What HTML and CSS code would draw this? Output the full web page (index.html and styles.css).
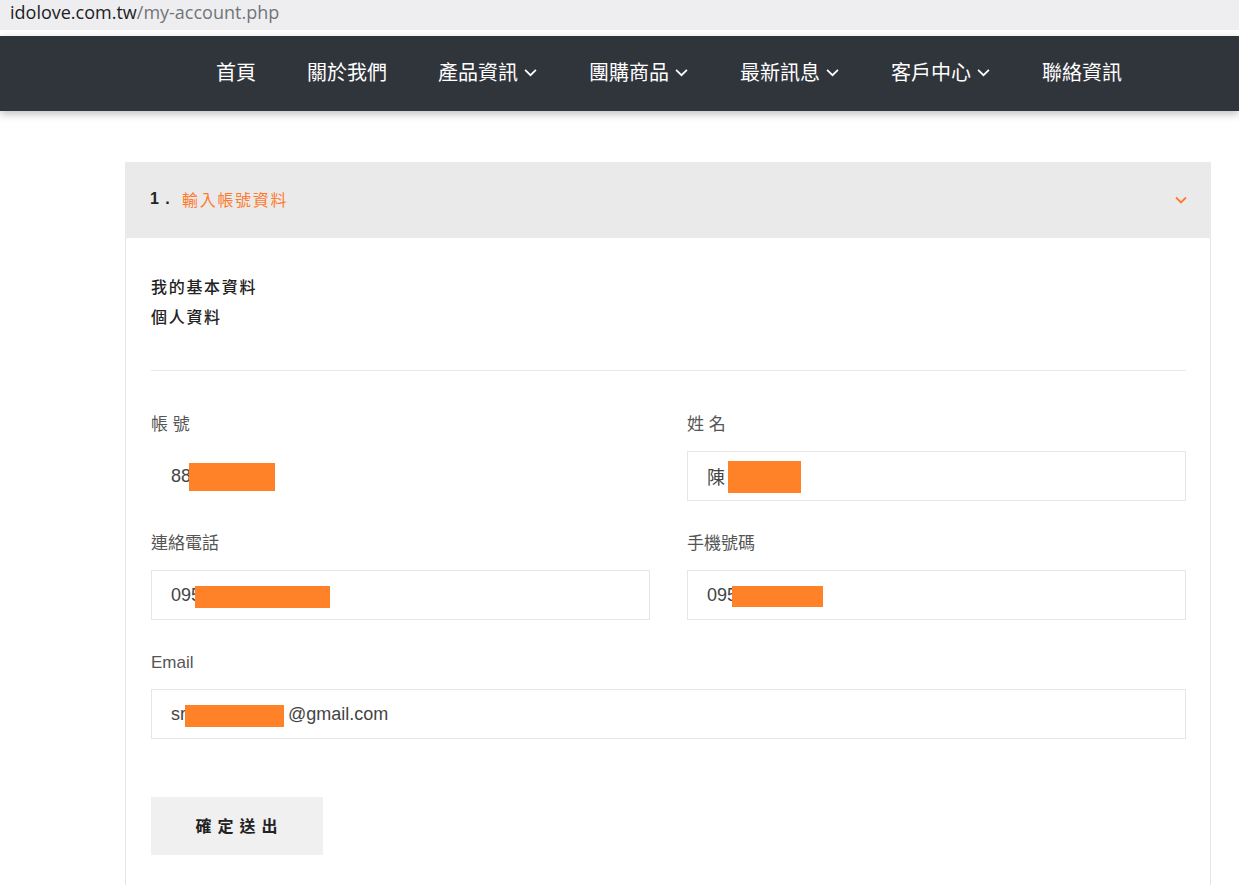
FILE: index.html
```html
<!DOCTYPE html>
<html lang="zh-Hant">
<head>
    <meta charset="UTF-8">
    <meta name="viewport" content="width=device-width, initial-scale=1.0">
    <title>我的帳戶</title>
    <link rel="stylesheet" href="styles.css">
</head>
<body>
    <div class="url-bar">
        <span class="url-host">idolove.com.tw</span><span class="url-path">/my-account.php</span>
    </div>

    <nav class="main-nav">
        <ul class="nav-list">
            <li class="nav-item">首頁</li>
            <li class="nav-item">關於我們</li>
            <li class="nav-item has-sub">產品資訊<svg class="caret" viewBox="0 0 12 8"><path d="M1 1.5l5 5 5-5"/></svg></li>
            <li class="nav-item has-sub">團購商品<svg class="caret" viewBox="0 0 12 8"><path d="M1 1.5l5 5 5-5"/></svg></li>
            <li class="nav-item has-sub">最新訊息<svg class="caret" viewBox="0 0 12 8"><path d="M1 1.5l5 5 5-5"/></svg></li>
            <li class="nav-item has-sub">客戶中心<svg class="caret" viewBox="0 0 12 8"><path d="M1 1.5l5 5 5-5"/></svg></li>
            <li class="nav-item">聯絡資訊</li>
        </ul>
    </nav>

    <div class="page">
        <div class="panel">
            <div class="panel-head">
                <div class="panel-title"><span class="step">1 .</span><span class="step-name">輸入帳號資料</span></div>
                <svg class="panel-toggle" viewBox="0 0 12 8"><path d="M1 1.5l5 5 5-5"/></svg>
            </div>

            <div class="panel-body">
                <div class="intro">
                    <p>我的基本資料</p>
                    <p>個人資料</p>
                </div>

                <div class="form-grid">
                    <div class="field">
                        <label class="field-label">帳 號</label>
                        <div class="field-value readonly">88<span class="mask mask-account"></span></div>
                    </div>
                    <div class="field">
                        <label class="field-label">姓 名</label>
                        <div class="field-value">陳<span class="mask mask-name"></span></div>
                    </div>
                    <div class="field">
                        <label class="field-label">連絡電話</label>
                        <div class="field-value">095<span class="mask mask-phone"></span></div>
                    </div>
                    <div class="field">
                        <label class="field-label">手機號碼</label>
                        <div class="field-value">095<span class="mask mask-mobile"></span></div>
                    </div>
                    <div class="field wide">
                        <label class="field-label">Email</label>
                        <div class="field-value">sr<span class="mask mask-email"></span>@gmail.com</div>
                    </div>
                </div>

                <button class="submit-btn">確定送出</button>
            </div>
        </div>
    </div>
</body>
</html>
```

FILE: styles.css
```css
body {
    margin: 0;
    padding: 0;
    background-color: #fff;
    font-family: "Liberation Sans", Arial, "Noto Sans CJK TC", sans-serif;
    color: #333;
}

p {
    margin: 0;
}

.url-bar {
    height: 30px;
    padding-left: 10px;
    background-color: #eeeef0;
    border-bottom: 6px solid #fff;
    font-family: "Open Sans", "Noto Sans", sans-serif;
    font-size: 18px;
    line-height: 25px;
}

.url-host {
    color: #202124;
}

.url-path {
    color: #70757a;
}

.main-nav {
    height: 75px;
    background-color: #30343b;
    box-shadow: 0 3px 8px rgba(0, 0, 0, 0.25);
    position: relative;
}

.nav-list {
    display: flex;
    align-items: center;
    gap: 51px;
    height: 100%;
    margin: 0;
    padding: 0 0 4px 216px;
    box-sizing: border-box;
    list-style: none;
}

.nav-item {
    display: flex;
    align-items: center;
    color: #fff;
    font-family: "Noto Sans CJK TC", sans-serif;
    font-size: 20px;
    font-weight: 400;
    line-height: 1;
}

.caret {
    width: 13px;
    height: 9px;
    margin-left: 6px;
    margin-right: 1px;
    margin-top: 2px;
    fill: none;
    stroke: #fff;
    stroke-width: 1.6;
}

.page {
    padding: 51px 28px 0 125px;
}

.panel {
    border: 1px solid #e6e6e6;
    border-bottom: none;
}

.panel-head {
    display: flex;
    align-items: center;
    justify-content: space-between;
    height: 76px;
    padding: 0 24px 0 25px;
    background-color: #eaeaea;
    margin: -1px -1px 0;
}

.panel-title {
    display: flex;
    align-items: center;
    font-size: 16px;
    margin-top: -2px;
}

.step {
    font-weight: bold;
    color: #222;
    width: 32px;
    letter-spacing: 1px;
}

.step-name {
    font-family: "Noto Sans CJK TC", sans-serif;
    color: #ff7a30;
    letter-spacing: 1.7px;
}

.panel-toggle {
    width: 12px;
    height: 8px;
    fill: none;
    stroke: #ff7a30;
    stroke-width: 1.8;
}

.panel-body {
    padding: 33px 24px 30px 25px;
}

.intro {
    font-family: "Noto Sans CJK TC", sans-serif;
    font-size: 16px;
    font-weight: 500;
    line-height: 30px;
    letter-spacing: 1.7px;
    color: #222;
    padding-bottom: 39px;
    border-bottom: 1px solid #e8e8e8;
}

.form-grid {
    display: grid;
    grid-template-columns: 1fr 1fr;
    column-gap: 37px;
    row-gap: 29px;
    padding-top: 40px;
}

.field.wide {
    grid-column: 1 / 3;
}

.field-label {
    display: block;
    height: 24px;
    padding-top: 2px;
    margin-bottom: 14px;
    font-family: "Liberation Sans", Arial, "Noto Sans CJK TC", sans-serif;
    font-size: 17px;
    line-height: 24px;
    color: #555;
}

.field-value {
    display: flex;
    align-items: center;
    height: 48px;
    padding: 0 19px;
    border: 1px solid #e6e6e6;
    font-family: "Liberation Sans", Arial, "Noto Sans CJK TC", sans-serif;
    font-size: 18px;
    color: #444;
}

.field-value.readonly {
    border-color: transparent;
}

.mask {
    display: inline-block;
    background-color: #ff8228;
}

.mask-account {
    width: 86px;
    height: 28px;
    margin-left: -2px;
    margin-top: 1px;
}

.mask-name {
    width: 73px;
    height: 32px;
    margin-left: 3px;
    margin-top: 2px;
}

.mask-phone {
    width: 135px;
    height: 22px;
    margin-left: -6px;
    margin-top: 4px;
}

.mask-mobile {
    width: 91px;
    height: 21px;
    margin-left: -5px;
    margin-top: 2px;
}

.mask-email {
    width: 99px;
    height: 22px;
    margin-left: -1px;
    margin-right: 4px;
    margin-top: 3px;
}

.submit-btn {
    display: block;
    width: 172px;
    height: 58px;
    margin-top: 58px;
    border: none;
    background-color: #f0f0f0;
    font-family: "Noto Sans CJK TC", sans-serif;
    font-size: 16px;
    font-weight: bold;
    letter-spacing: 6px;
    padding: 0 0 3px 5px;
    color: #222;
    cursor: pointer;
}
```
